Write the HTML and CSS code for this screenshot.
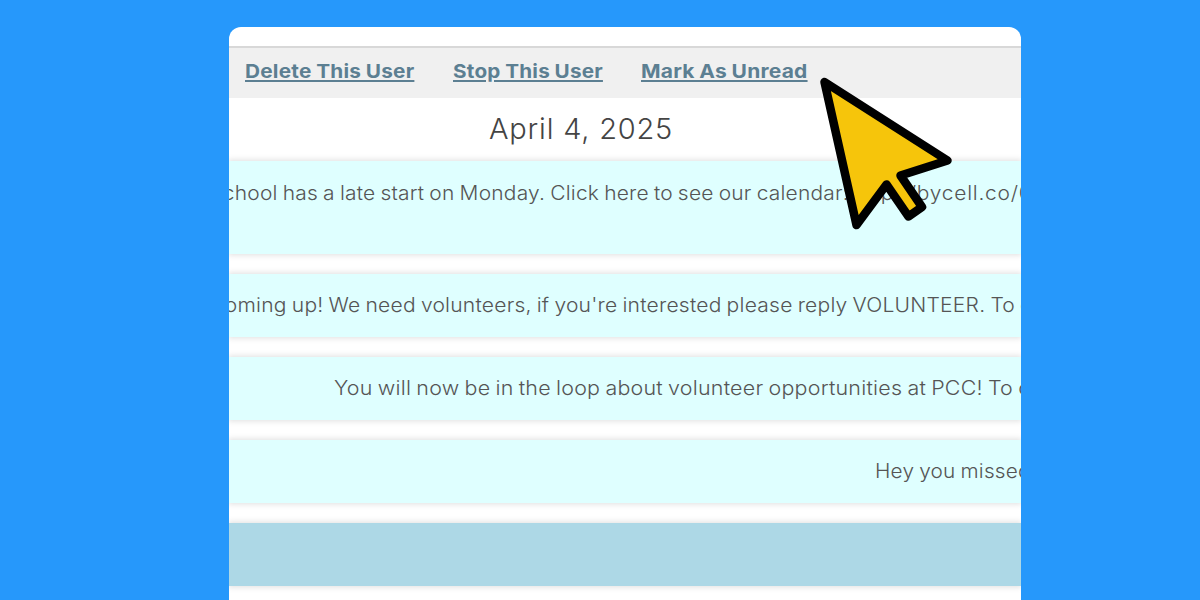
FILE: index.html
```html
<!DOCTYPE html>
<html lang="en">
<head>
  <meta charset="UTF-8" />
  <meta name="viewport" content="width=device-width, initial-scale=1.0"/>
  <title>Messages</title>
  <link rel="stylesheet" href="styles.css">
</head>
<body>

<main class="panel">
  <nav class="actions">
    <a class="delete" href="#">Delete This User</a>
    <a class="stop" href="#">Stop This User</a>
    <a class="unread" href="#">Mark As Unread</a>
  </nav>

  <h1>April 4, 2025</h1>

  <div class="messages">
    <div class="message tall"><p class="late-start">school has a late start on Monday. Click here to see our calendar: <span class="url">http://bycell.co/0</span></p></div>
    <div class="message"><p class="volunteers">coming up! We need volunteers, if you're interested please reply VOLUNTEER. To o</p></div>
    <div class="message"><p class="loop">You will now be in the loop about volunteer opportunities at PCC! To o</p></div>
    <div class="message"><p class="missed">Hey you missed</p></div>
    <div class="message incoming"></div>
  </div>
</main>

<svg class="cursor" width="140" height="160" viewBox="0 0 140 160">
  <path d="M8.500 7 L131.500 85.500 L84.500 100.500 L106 132 L92.500 141.500 L70.500 109.500 L40.500 150 Z"/>
</svg>

</body>
</html>
```

FILE: styles.css
```css
* {
  box-sizing: border-box;
}

body {
  margin: 0;
  height: 600px;
  overflow: hidden;
  background: #2698fb;
  font-family: Inter, "Open Sans", sans-serif;
  color: #555;
}

.panel {
  width: 792.5px;
  height: 573px;
  margin: 27px 0 0 228.5px;
  padding-top: 19px;
  background: #fff;
  border-radius: 12px 12px 0 0;
  overflow: hidden;
}

.actions {
  display: flex;
  gap: 39px;
  height: 52px;
  padding: 12px 0 0 16px;
  background: #f0f0f0;
  border-top: 2px solid #d8d8d8;
}

.actions a {
  font-size: 19px;
  line-height: 24px;
  font-weight: 700;
  letter-spacing: 0.2px;
  word-spacing: -0.5px;
  white-space: nowrap;
  color: #5c7f92;
  text-decoration: underline;
  text-decoration-thickness: 1.5px;
  text-underline-offset: 2px;
  transform-origin: 0 0;
}

.delete {
  width: 169px;
  transform: scaleX(1.095);
}

.stop {
  width: 149.5px;
  transform: scaleX(1.09);
}

.unread {
  transform: scaleX(1.105);
}

h1 {
  height: 63px;
  margin: 0;
  padding: 13px 0 0 260.5px;
  font-size: 29px;
  line-height: 36px;
  font-weight: 300;
  letter-spacing: 0.8px;
  color: #444;
}

.messages {
  display: flex;
  flex-direction: column;
  gap: 19.6px;
}

.message {
  flex: none;
  height: 63.4px;
  padding-top: 18.5px;
  background: #dfffff;
  box-shadow: 0 0 6px 1px rgba(0, 0, 0, 0.13);
}

.message.tall {
  height: 93.4px;
}

.message.incoming {
  background: #add8e6;
}

/* the text is set slightly wide */
.message p {
  margin: 0;
  font-size: 19.5px;
  line-height: 26px;
  font-weight: 350;
  letter-spacing: 0.2px;
  word-spacing: -1px;
  white-space: nowrap;
  transform-origin: 0 0;
}

.late-start {
  text-indent: -16px;
  transform: scaleX(1.075);
}

.url {
  letter-spacing: 0.7px;
}

.volunteers {
  text-indent: -15px;
  transform: scaleX(1.08);
}

.message .loop {
  margin-left: 105px;
  transform: scaleX(1.1);
}

.message .missed {
  margin-left: 646px;
  transform: scaleX(1.065);
}

/* pointer over the toolbar links */
.cursor {
  position: absolute;
  left: 816px;
  top: 75px;
  fill: #f6c50b;
  stroke: #000;
  stroke-width: 8.5;
  stroke-linejoin: round;
}
```
